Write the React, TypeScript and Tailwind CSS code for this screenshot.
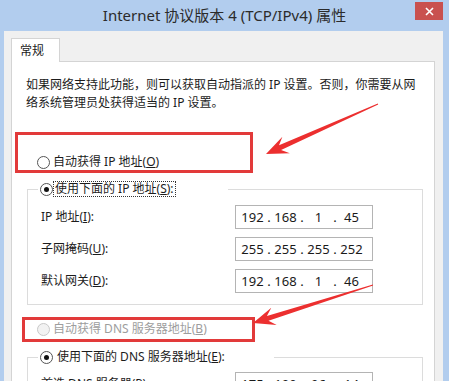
import React from 'react'

type Pt = [number, number]

// tapered freehand arrow, thin at the tail and widening into the head
function arrowPoints(tail: Pt, tip: Pt, headLen: number, headHalf: number, neckHalf: number, tailHalf: number) {
    const dx = tip[0] - tail[0]
    const dy = tip[1] - tail[1]
    const len = Math.hypot(dx, dy)
    const ux = dx / len
    const uy = dy / len
    const nx = -uy
    const ny = ux
    const at = (d: number, w: number) =>
        `${(tip[0] - ux * d + nx * w).toFixed(1)},${(tip[1] - uy * d + ny * w).toFixed(1)}`
    return [
        at(len, tailHalf),
        at(headLen * 0.7, neckHalf),
        at(headLen, headHalf),
        at(0, 0),
        at(headLen, -headHalf),
        at(headLen * 0.7, -neckHalf),
        at(len, -tailHalf),
    ].join(' ')
}

function Radio({ checked, disabled }: { checked?: boolean; disabled?: boolean }) {
    return (
        <span
            className={`flex h-[13px] w-[13px] shrink-0 items-center justify-center rounded-full border ${
                disabled ? 'border-[#c8c8c8] bg-[#f2f2f2]' : 'border-[#555] bg-white'
            }`}
        >
            {checked && <span className="h-[5px] w-[5px] rounded-full bg-[#111]" />}
        </span>
    )
}

function IpBox({ parts }: { parts: string[] }) {
    return (
        <div className="flex h-[24px] w-[138px] items-center border border-[#b4b4b4] bg-white pl-[4px] text-[13px] leading-none text-[#1a1a1a]">
            {parts.map((p, i) => (
                <React.Fragment key={i}>
                    {i > 0 && <span className="w-[8px] text-center">.</span>}
                    <span className="w-[25px] text-center">{p}</span>
                </React.Fragment>
            ))}
        </div>
    )
}

function Row({ label, parts }: { label: React.ReactNode; parts: string[] }) {
    return (
        <div className="flex h-[24px] items-center justify-between">
            <span>{label}</span>
            <IpBox parts={parts} />
        </div>
    )
}

export default function App() {
    return (
        <div className="relative flex h-[381px] w-[449px] flex-col overflow-hidden bg-[#b2cdee] font-['Noto_Sans','Noto_Sans_CJK_SC',sans-serif] text-[12px] leading-[14px] text-[#1c1c1c]">
            {/* title bar */}
            <div className="relative flex h-[31px] shrink-0 items-center justify-center">
                <span className="text-[15px] leading-none text-[#2b2b2b]">Internet 协议版本 4 (TCP/IPv4) 属性</span>
                <div className="absolute right-[6px] top-[2px] flex h-[18px] w-[28px] items-center justify-center bg-[#c9514f]">
                    <svg width="9" height="9" viewBox="0 0 9 9">
                        <path d="M1 1L8 8M8 1L1 8" stroke="white" strokeWidth="1.6" />
                    </svg>
                </div>
            </div>

            {/* dialog body */}
            <div className="ml-[4px] mr-[6px] flex flex-1 flex-col bg-[#f0f0f0] pl-[7px] pr-[8px] pt-[7px]">
                <div className="relative z-10 flex h-[24px] w-[49px] items-center border border-b-0 border-[#d4d4d4] bg-white pl-[8px]">
                    常规
                </div>
                <div className="-mt-px flex flex-1 flex-col border border-[#d4d4d4] bg-white">
                    <p className="pl-[14px] pt-[14px] leading-[18px]">
                        如果网络支持此功能，则可以获取自动指派的 IP 设置。否则，你需要从网
                        <br />
                        络系统管理员处获得适当的 IP 设置。
                    </p>

                    <div className="ml-[25px] mt-[42px] flex h-[16px] items-center gap-[3px]">
                        <Radio />
                        <span>
                            自动获得 IP 地址(<u>O</u>)
                        </span>
                    </div>

                    <fieldset className="ml-[15px] mr-[11px] mt-[11px] border border-[#dcdcdc] pb-[11px] pl-[13px] pr-[49px]">
                        <legend className="-ml-[3px] flex w-[190px] items-center px-[2px]">
                            <Radio checked />
                            <span className="border border-dotted border-[#333] pl-[1px] pr-[1px]">
                                使用下面的 IP 地址(<u>S</u>):
                            </span>
                        </legend>
                        <div className="flex flex-col gap-[8px] pt-[8px]">
                            <Row label={<>IP 地址(<u>I</u>):</>} parts={['192', '168', '1', '45']} />
                            <Row label={<>子网掩码(<u>U</u>):</>} parts={['255', '255', '255', '252']} />
                            <Row label={<>默认网关(<u>D</u>):</>} parts={['192', '168', '1', '46']} />
                        </div>
                    </fieldset>

                    <div className="ml-[25px] mt-[16px] flex h-[16px] items-center gap-[3px] text-[#9d9d9d]">
                        <Radio disabled />
                        <span>
                            自动获得 DNS 服务器地址(<u>B</u>)
                        </span>
                    </div>

                    <fieldset className="ml-[15px] mr-[11px] mt-[12px] border border-[#dcdcdc] pb-[11px] pl-[13px] pr-[49px]">
                        <legend className="-ml-[3px] flex w-[236px] items-center gap-[2px] px-[2px]">
                            <Radio checked />
                            <span className="border border-transparent pl-[1px]">
                                使用下面的 DNS 服务器地址(<u>E</u>):
                            </span>
                        </legend>
                        <div className="flex flex-col gap-[8px] pt-[7px]">
                            <Row label={<>首选 DNS 服务器(<u>P</u>):</>} parts={['175', '100', '96', '14']} />
                        </div>
                    </fieldset>
                </div>
            </div>

            {/* annotation boxes */}
            <div className="absolute left-[15px] top-[132px] h-[41px] w-[238px] border-[3px] border-[#e23a3a]" />
            <div className="absolute left-[22px] top-[317px] h-[25px] w-[233px] border-[3px] border-[#e23a3a]" />

            {/* annotation arrows */}
            <svg className="pointer-events-none absolute inset-0" width="449" height="381">
                <polygon points={arrowPoints([378, 104], [266, 154], 22, 9, 2.6, 0.4)} fill="#ec2f2f" />
                <polygon points={arrowPoints([373, 285], [253, 323], 22, 9, 2.6, 0.4)} fill="#ec2f2f" />
            </svg>
        </div>
    )
}
